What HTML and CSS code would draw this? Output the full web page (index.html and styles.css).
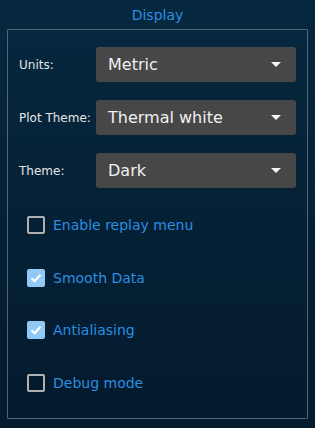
FILE: index.html
```html
<!DOCTYPE html>
<html lang="en">
  <head>
    <title>Display settings</title>
    <link rel="stylesheet" href="styles.css">
  </head>
  <body>
    <h1 class="title">Display</h1>
    <div class="panel">
      <div class="field">
        <label class="field-label">Units:</label>
        <div class="select">
          <span>Metric</span>
          <span class="arrow"></span>
        </div>
      </div>
      <div class="field">
        <label class="field-label">Plot Theme:</label>
        <div class="select">
          <span>Thermal white</span>
          <span class="arrow"></span>
        </div>
      </div>
      <div class="field">
        <label class="field-label">Theme:</label>
        <div class="select">
          <span>Dark</span>
          <span class="arrow"></span>
        </div>
      </div>

      <div class="checks">
        <div class="check">
          <span class="box"></span>
          <span class="check-label">Enable replay menu</span>
        </div>
        <div class="check">
          <span class="box checked">
            <svg width="14" height="14" viewBox="0 0 14 14"><path d="M2.5 7.2 L5.6 10.2 L11.5 3.8" fill="none" stroke="#fff" stroke-width="2.2"/></svg>
          </span>
          <span class="check-label">Smooth Data</span>
        </div>
        <div class="check">
          <span class="box checked">
            <svg width="14" height="14" viewBox="0 0 14 14"><path d="M2.5 7.2 L5.6 10.2 L11.5 3.8" fill="none" stroke="#fff" stroke-width="2.2"/></svg>
          </span>
          <span class="check-label">Antialiasing</span>
        </div>
        <div class="check">
          <span class="box"></span>
          <span class="check-label">Debug mode</span>
        </div>
      </div>
    </div>
  </body>
</html>
```

FILE: styles.css
```css
html, body {
  margin: 0;
  height: 100%;
}
body {
  background: linear-gradient(to bottom, #06283f, #041a2d);
  font-family: "DejaVu Sans", Verdana, sans-serif;
  overflow: hidden;
}
.title {
  margin: 0;
  height: 29px;
  line-height: 30px;
  font-size: 14px;
  font-weight: normal;
  text-align: center;
  color: #2b8ee0;
}
.panel {
  margin: 0 7px;
  height: 390px;
  box-sizing: border-box;
  border: 1px solid #50657a;
  border-radius: 1px;
  padding: 17px 11px 0 11px;
}
.field {
  display: flex;
  align-items: center;
  height: 35px;
  margin-bottom: 18px;
}
.field-label {
  width: 77px;
  font-size: 12px;
  color: #e6e6e6;
}
.select {
  flex: 1;
  height: 35px;
  display: flex;
  align-items: center;
  justify-content: space-between;
  padding: 0 15px 0 12px;
  background: #474747;
  border-radius: 3px;
  font-size: 16px;
  color: #f0f0f0;
}
.arrow {
  width: 0;
  height: 0;
  border-left: 5px solid transparent;
  border-right: 5px solid transparent;
  border-top: 5px solid #f5f5f5;
}
.checks {
  display: flex;
  flex-direction: column;
  gap: 34.7px;
  padding: 10px 0 0 8px;
}
.check {
  display: flex;
  align-items: center;
  height: 18px;
}
.box {
  width: 18px;
  height: 18px;
  box-sizing: border-box;
  border: 2px solid #b0b0b0;
  border-radius: 2px;
  margin-right: 8px;
  display: flex;
  align-items: center;
  justify-content: center;
}
.box.checked {
  background: #90c9f6;
  border-color: #90c9f6;
}
.check-label {
  font-size: 14px;
  color: #2b8ee0;
}
```
